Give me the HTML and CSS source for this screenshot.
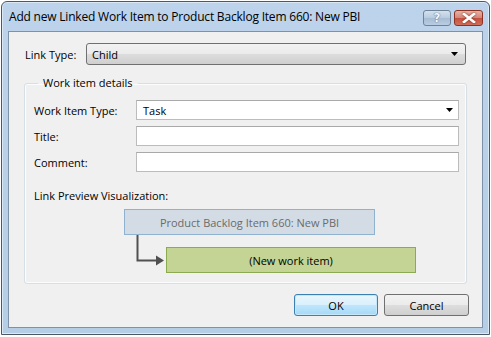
FILE: index.html
```html
<!DOCTYPE html>
<html lang="en">

<head>
  <meta charset="UTF-8">
  <meta name="viewport" content="width=device-width, initial-scale=1.0">
  <title>Add new Linked Work Item</title>
  <link rel="stylesheet" href="styles.css">
</head>

<body>
  <div class="window">
    <header class="titlebar">
      <span class="title">Add new Linked Work Item to Product Backlog Item 660: New PBI</span>
      <div class="caption-buttons">
        <button class="caption help" title="Help">?</button>
        <button class="caption close" title="Close">
          <svg viewBox="0 0 14 10" width="14" height="10">
            <path d="M2 1 12 9M12 1 2 9" stroke="#fff" stroke-width="2.6" stroke-linecap="square" />
          </svg>
        </button>
      </div>
    </header>

    <form class="client">
      <div class="link-row">
        <label for="link-type">Link Type:</label>
        <div class="combo combo-button" id="link-type">
          <span>Child</span>
          <svg class="arrow" viewBox="0 0 7 4" width="7" height="4"><path d="M0 0h7L3.5 4z" /></svg>
        </div>
      </div>

      <fieldset class="group">
        <legend>Work item details</legend>
        <div class="fields">
          <label for="wit">Work Item Type:</label>
          <div class="combo combo-edit" id="wit">
            <span>Task</span>
            <svg class="arrow" viewBox="0 0 7 4" width="7" height="4"><path d="M0 0h7L3.5 4z" /></svg>
          </div>

          <label for="title">Title:</label>
          <input id="title" name="title">

          <label for="comment">Comment:</label>
          <input id="comment" name="comment">
        </div>

        <p class="preview-label">Link Preview Visualization:</p>
        <div class="preview">
          <div class="node parent">Product Backlog Item 660: New PBI</div>
          <div class="child-row">
            <svg class="connector" viewBox="0 0 42 38" width="42" height="38">
              <path d="M13.5 0V25.5H33" fill="none" stroke="#505050" stroke-width="2" />
              <path d="M32 20.5 40 25.5 32 30.5z" fill="#505050" />
            </svg>
            <div class="node child">(New work item)</div>
          </div>
        </div>
      </fieldset>

      <div class="actions">
        <button type="submit" class="btn default">OK</button>
        <button type="button" class="btn">Cancel</button>
      </div>
    </form>
  </div>
</body>

</html>
```

FILE: styles.css
```css
body {
  margin: 0;
  font-family: "Open Sans", "Noto Sans", sans-serif;
  font-size: 11px;
  color: #000;
  background: #fff;
}

.window {
  box-sizing: border-box;
  margin: 1px;
  inline-size: 489px;
  block-size: 334px;
  display: flex;
  flex-direction: column;
  padding: 0 6px 6px 6px;
  background: linear-gradient(#bcd3eb, #b6cde6);
  border: 1px solid #4c5866;
  border-radius: 6px 6px 0 0;
  box-shadow: inset 0 0 0 1px #dbe8f5;
}

/* title bar */

.titlebar {
  display: flex;
  align-items: center;
  justify-content: space-between;
  block-size: 29px;
  padding-inline-start: 1px;
}

.title {
  font-size: 12px;
  letter-spacing: -0.2px;
  margin-block-start: -1px;
}

.caption-buttons {
  display: flex;
  gap: 3px;
  margin-block-start: 3px;
}

.caption {
  box-sizing: border-box;
  inline-size: 28px;
  block-size: 16px;
  padding: 0;
  display: grid;
  place-items: center;
  border-radius: 3px;
  font: 700 12px/1 "DejaVu Sans", sans-serif;
}

.help {
  color: #f4f8fc;
  text-shadow: 0 0 1px #52637a, 0 0 1px #52637a;
  background: linear-gradient(#d4e1ee, #b8cbdf 50%, #a6bcd4 51%, #b9cde2);
  border: 1px solid #6f8296;
}

.close {
  inline-size: 29px;
  background: linear-gradient(#e6b3a6, #d58675 50%, #c4503f 51%, #d0705a);
  border: 1px solid #8a3325;
}

.close svg {
  filter: drop-shadow(0 0 1px #7a2a1e);
}

/* client area */

.client {
  flex: 1;
  display: flex;
  flex-direction: column;
  padding: 11px 16px 10px 16px;
  background: #f0f0f0;
  border: 1px solid #7d92a8;
}

.link-row {
  display: grid;
  grid-template-columns: 61px 1fr;
  align-items: center;
}

.combo {
  box-sizing: border-box;
  display: flex;
  align-items: center;
  justify-content: space-between;
  padding-inline: 5px 7px;
}

.combo-button {
  block-size: 22px;
  border: 1px solid #707070;
  border-radius: 3px;
  background: linear-gradient(#f2f2f2, #ebebeb 50%, #dddddd 51%, #cfcfcf);
}

.combo-edit {
  block-size: 20px;
  padding-inline: 6px 5px;
  background: #fff;
  border: 1px solid #bcbcbc;
  border-block-start-color: #a9a9a9;
}

.arrow {
  fill: #000;
}

/* group box */

.group {
  margin: 10px -1px 0 -1px;
  padding: 9px 7px 10px 9px;
  border: 1px solid #d5dfe5;
  border-radius: 3px;
  box-shadow: inset 0 0 0 1px #fafcfd;
}

legend {
  padding: 0 5px;
  margin-inline-start: 4px;
  line-height: 16px;
}

.fields {
  display: grid;
  grid-template-columns: 102px 1fr;
  grid-auto-rows: 20px;
  row-gap: 6px;
  align-items: center;
}

input {
  box-sizing: border-box;
  block-size: 20px;
  inline-size: 100%;
  margin: 0;
  font: inherit;
  background: #fff;
  border: 1px solid #bcbcbc;
  border-block-start-color: #a9a9a9;
}

.preview-label {
  margin: 16px 0 0;
  line-height: 16px;
}

.preview {
  display: flex;
  flex-direction: column;
  padding-inline-start: 90px;
  margin-block-start: 5px;
}

.node {
  box-sizing: border-box;
  inline-size: 251px;
  block-size: 26px;
  display: grid;
  place-items: center;
}

.parent {
  color: #6b6b6b;
  background: #d3dce5;
  border: 1px solid #8fb2d1;
}

.child-row {
  display: flex;
  align-items: flex-start;
}

.connector {
  flex: none;
}

.child {
  margin-block-start: 12px;
  inline-size: 250px;
  background: #c3d495;
  border: 1px solid #8cab50;
}

/* dialog buttons */

.actions {
  display: flex;
  justify-content: flex-end;
  gap: 6px;
  margin-block-start: 10px;
  margin-inline-end: -3px;
}

.btn {
  box-sizing: border-box;
  inline-size: 85px;
  block-size: 22px;
  padding: 0;
  font: inherit;
  color: #000;
  border: 1px solid #707070;
  border-radius: 3px;
  background: linear-gradient(#f2f2f2, #ebebeb 50%, #dddddd 51%, #cfcfcf);
}

.default {
  inline-size: 84px;
  border-color: #3c7fb1;
  background: linear-gradient(#eaf6fd, #d9f0fc 50%, #bee6fd 51%, #a7d9f5);
  box-shadow: inset 0 0 0 1px #c5e7fa;
}
```
